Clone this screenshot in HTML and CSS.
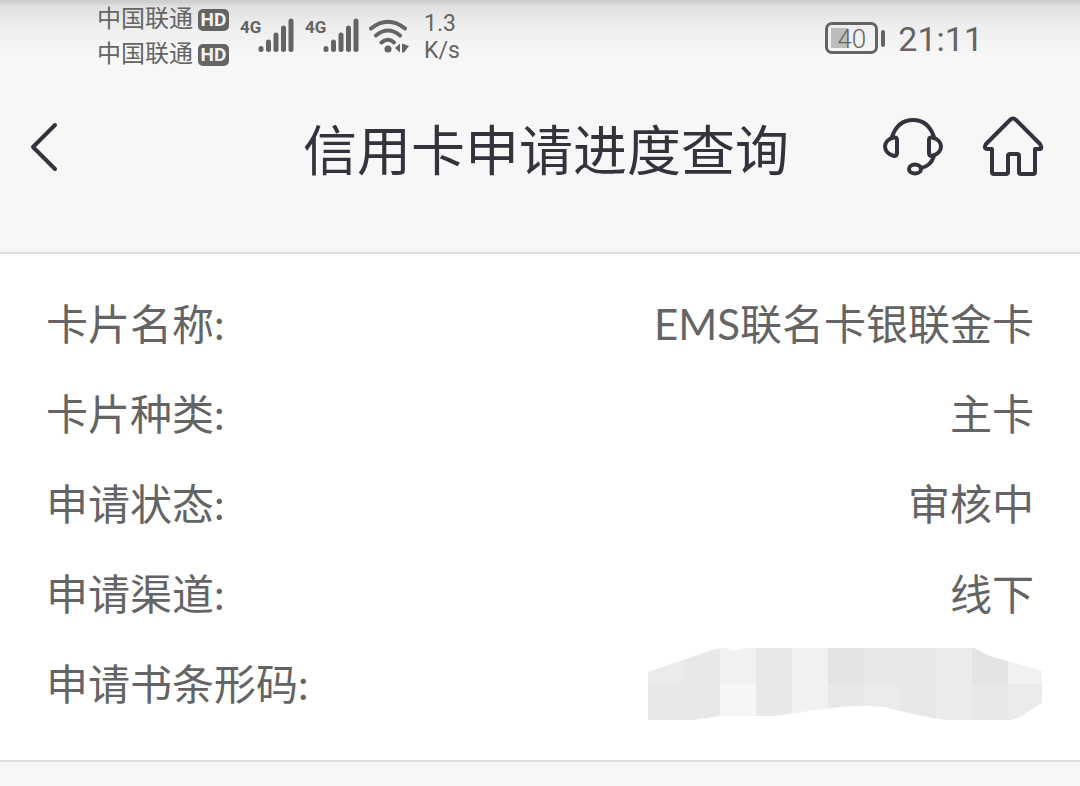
FILE: index.html
```html
<!DOCTYPE html>
<html lang="zh-CN">
<head>
<meta charset="utf-8">
<meta name="viewport" content="width=device-width, initial-scale=1">
<title>信用卡申请进度查询</title>
<link rel="stylesheet" href="styles.css">
</head>
<body>
<header class="top">
  <div class="status">
    <div class="carriers">
      <div class="carrier">中国联通<span class="hd">HD</span></div>
      <div class="carrier">中国联通<span class="hd">HD</span></div>
    </div>
    <div class="signal">
      <span class="net">4G</span>
      <svg class="bars" viewBox="0 0 36 34" aria-hidden="true"><path d="M3 30.500v1M10.500 24v7.500M18 17v14.500M25.500 10v21.500M33 3v28.500"/></svg>
    </div>
    <div class="signal">
      <span class="net">4G</span>
      <svg class="bars" viewBox="0 0 36 34" aria-hidden="true"><path d="M3 30.500v1M10.500 24v7.500M18 17v14.500M25.500 10v21.500M33 3v28.500"/></svg>
    </div>
    <svg class="wifi" viewBox="0 0 42 36" aria-hidden="true">
      <path class="wave" d="M3 10.500Q20 -3 37 10.500M8 17.500Q20 7.500 32 17.500M13.500 24.500Q20 19 26 24.500"/>
      <circle cx="20" cy="31" r="3.500"/>
      <path d="M27 30l5-4.500v9zM34 25.500l7 2.500-5 6.500h-2z"/>
    </svg>
    <div class="speed"><span>1.3</span><span>K/s</span></div>
    <div class="power">
      <div class="battery">40</div>
      <time class="clock">21:11</time>
    </div>
  </div>
  <nav class="bar">
    <button class="icon-button" type="button" aria-label="返回">
      <svg class="back" viewBox="0 0 30 50" aria-hidden="true"><path d="M25 3L3 25l22 22"/></svg>
    </button>
    <h1 class="title">信用卡申请进度查询</h1>
    <div class="actions">
      <button class="icon-button" type="button" aria-label="客服">
        <svg class="action" viewBox="0 0 62 62" aria-hidden="true"><path d="M10 21C14 9 22 4 31 4s17 5 21 17M15 24Q15 21 12 21.500C0 24 0 37 12 40Q15 40 15 37ZM47 24Q47 21 50 21.500C62 24 62 37 50 40Q47 40 47 37ZM52 40Q49 50 39 52"/><ellipse cx="33" cy="53" rx="6" ry="4.500"/></svg>
      </button>
      <button class="icon-button" type="button" aria-label="首页">
        <svg class="action" viewBox="0 0 62 62" aria-hidden="true"><path d="M28 4Q31 1 34 4L58 28Q61 33 57 33H53V56Q53 58 51 58H39Q37 58 37 56V40Q37 38 35 38H28Q26 38 26 40V56Q26 58 24 58H12Q10 58 10 56V33H6Q1 33 4 28Z"/></svg>
      </button>
    </div>
  </nav>
</header>
<main class="panel">
  <dl class="details">
    <div class="row"><dt>卡片名称:</dt><dd>EMS联名卡银联金卡</dd></div>
    <div class="row"><dt>卡片种类:</dt><dd>主卡</dd></div>
    <div class="row"><dt>申请状态:</dt><dd>审核中</dd></div>
    <div class="row"><dt>申请渠道:</dt><dd>线下</dd></div>
    <div class="row"><dt>申请书条形码:</dt><dd class="masked">
      <svg class="mask" viewBox="0 0 394 72" role="img" aria-label="已隐藏">
        <clipPath id="shape"><path d="M0 24L64 2Q72 0 78 0L86 3 96 0H326L342 8 394 23V55L370 70 362 72H298Q270 68 236 59 208 56 176 61L124 68H72L44 72H0Z"/></clipPath>
        <g clip-path="url(#shape)">
          <path fill="#ebebeb" d="M0 0h36v36H0zM288 0h36v72h-36zM360 36h34v36h-34zM216 36h36v36h-36z"/>
          <path fill="#e8e8e8" d="M36 0h36v72H36zM0 36h36v36H0zM108 0h36v72h-36zM180 36h36v36h-36zM216 0h72v36h-72zM252 36h36v36h-36zM324 36h36v36h-36z"/>
          <path fill="#e4e4e4" d="M180 0h36v36h-36zM324 0h36v36h-36z"/>
          <path fill="#f1f1f1" d="M72 0h36v36H72zM144 0h36v72h-36zM360 0h34v36h-34z"/>
          <path fill="#f6f6f6" d="M72 36h36v36H72z"/>
        </g>
      </svg>
    </dd></div>
  </dl>
</main>
</body>
</html>
```
FILE: styles.css
```css
* {
  box-sizing: border-box;
}

body {
  margin: 0;
  background: #f7f7f7;
  color: #646464;
  font-family: Lato, "Noto Sans CJK SC", sans-serif;
}

.top {
  background: linear-gradient(#cdcdcd 0, #d2d2d2 3px, #e0e0e0 6px, #ededed 24px, #f7f7f7 54px);
  border-bottom: 2px solid #dedede;
}

.status {
  display: flex;
  align-items: flex-start;
  height: 76px;
  padding: 2px 97px 0;
  font-family: Roboto, "Noto Sans CJK SC", sans-serif;
}

.carriers {
  width: 143px;
}

.carrier {
  display: flex;
  align-items: center;
  gap: 5px;
  height: 35px;
  font-size: 24px;
  line-height: 35px;
}

.hd {
  width: 31px;
  height: 22px;
  border-radius: 5px;
  background: #646464;
  color: #f4f4f4;
  font-size: 19px;
  font-weight: 700;
  line-height: 22px;
  text-align: center;
}

.signal {
  display: flex;
  width: 65px;
  padding-top: 15px;
}

.net {
  width: 18px;
  font-size: 17px;
  font-weight: 700;
  line-height: 20px;
}

.bars {
  flex: none;
  width: 36px;
  height: 36px;
  fill: none;
  stroke: #646464;
  stroke-width: 5;
  stroke-linecap: round;
}

.wifi {
  width: 42px;
  height: 36px;
  margin: 16px 14px 0 -2px;
  fill: #646464;
}

.wave {
  fill: none;
  stroke: #646464;
  stroke-width: 4;
  stroke-linecap: round;
}

.speed {
  display: flex;
  flex-direction: column;
  padding-top: 8px;
  font-size: 23px;
  line-height: 27px;
}

.power {
  display: flex;
  align-items: center;
  gap: 20px;
  margin-left: auto;
  padding-top: 14px;
}

.battery {
  position: relative;
  width: 53px;
  height: 32px;
  border: 3px solid #646464;
  border-radius: 7px;
  background: linear-gradient(#bdbdbd, #bdbdbd) 3px 3px / 17px 20px no-repeat;
  font-size: 26px;
  font-weight: 300;
  line-height: 28px;
  text-align: center;
}

.battery::after {
  content: "";
  position: absolute;
  top: 5px;
  right: -10px;
  width: 4px;
  height: 17px;
  border-radius: 2px;
  background: #646464;
}

.clock {
  padding-top: 3px;
  font-size: 34px;
  line-height: 40px;
}

.bar {
  display: grid;
  grid-template-columns: 1fr auto 1fr;
  align-items: center;
  height: 176px;
  padding: 0 36px 34px 30px;
  color: #34333d;
}

.title {
  margin: 0;
  padding: 8px 0 0 18px;
  font-size: 54px;
  font-weight: 400;
  line-height: 76px;
}

.icon-button {
  display: flex;
  justify-self: start;
  padding: 0;
  border: 0;
  background: none;
  color: inherit;
}

.icon-button svg {
  fill: none;
  stroke: currentColor;
  stroke-width: 4;
  stroke-linecap: round;
  stroke-linejoin: round;
}

.back {
  width: 30px;
  height: 50px;
}

.action {
  width: 62px;
  height: 62px;
}

.actions {
  display: flex;
  justify-content: flex-end;
  gap: 38px;
}

.panel {
  padding: 25px 46px 31px;
  border-bottom: 2px solid #dedede;
  background: #fff;
}

.details {
  margin: 0;
}

.row {
  display: flex;
  align-items: center;
  justify-content: space-between;
  height: 90px;
  font-size: 42px;
  line-height: 60px;
}

.row dd {
  margin: 0;
}

.row .masked {
  display: flex;
  margin-right: -8px;
}

.mask {
  width: 394px;
  height: 72px;
}
```
